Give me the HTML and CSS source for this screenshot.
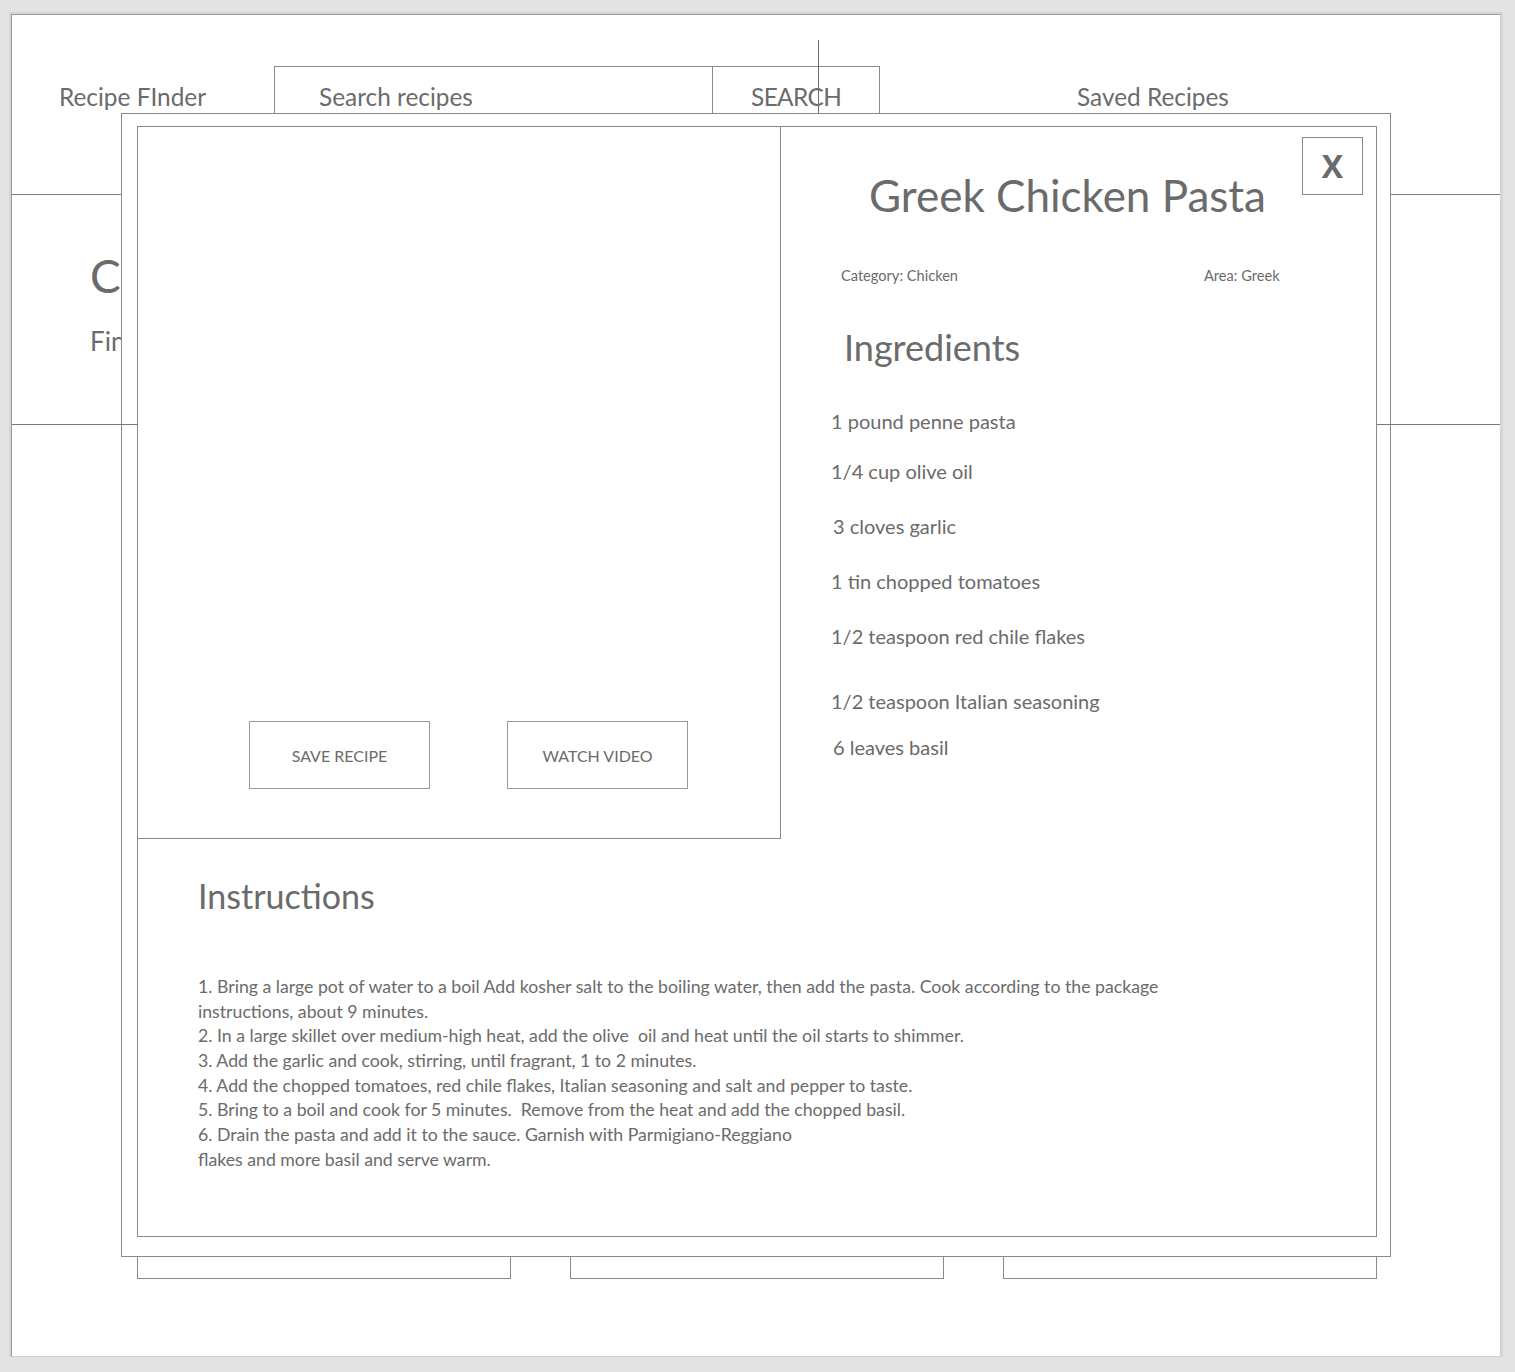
FILE: index.html
```html
<!DOCTYPE html>
<html lang="en">
<head>
    <meta charset="UTF-8">
    <meta name="viewport" content="width=device-width, initial-scale=1.0">
    <title>Recipe Finder</title>
    <link rel="stylesheet" href="styles.css">
</head>
<body>
    <div class="canvas">
        <!-- Шапка -->
        <header class="header">
            <div class="logo">Recipe FInder</div>
            <form class="search">
                <div class="search-input">Search recipes</div>
                <div class="search-btn">SEARCH</div>
            </form>
            <a href="#" class="saved-link">Saved Recipes</a>
        </header>

        <!-- Приветствие -->
        <section class="hero">
            <h1 class="hero-title">Cook Something New</h1>
            <p class="hero-text">Find recipes by name or ingredient</p>
        </section>
        <div class="divider"></div>

        <!-- Карточки рецептов -->
        <div class="cards">
            <div class="card"></div>
            <div class="card"></div>
            <div class="card"></div>
        </div>

        <!-- Окно рецепта -->
        <div class="modal">
            <div class="modal-inner">
                <div class="modal-top">
                    <div class="modal-image">
                        <button class="btn">SAVE RECIPE</button>
                        <button class="btn">WATCH VIDEO</button>
                    </div>
                    <div class="modal-details">
                        <button class="close-btn">X</button>
                        <h2 class="recipe-title">Greek Chicken Pasta</h2>
                        <div class="recipe-meta">
                            <span class="meta-category">Category: Chicken</span>
                            <span>Area: Greek</span>
                        </div>
                        <h3 class="section-title ingredients-title">Ingredients</h3>
                        <ul class="ingredients">
                            <li>1 pound penne pasta</li>
                            <li>1/4 cup olive oil</li>
                            <li class="shifted">3 cloves garlic</li>
                            <li>1 tin chopped tomatoes</li>
                            <li>1/2 teaspoon red chile flakes</li>
                            <li>1/2 teaspoon Italian seasoning</li>
                            <li class="shifted">6 leaves basil</li>
                        </ul>
                    </div>
                </div>
                <div class="instructions">
                    <h3 class="section-title instructions-title">Instructions</h3>
                    <div class="steps">
                        <p>1. Bring a large pot of water to a boil Add kosher salt to the boiling water, then add the pasta. Cook according to the package<br>instructions, about 9 minutes.</p>
                        <p>2. In a large skillet over medium-high heat, add the olive&nbsp; oil and heat until the oil starts to shimmer.</p>
                        <p>3. Add the garlic and cook, stirring, until fragrant, 1 to 2 minutes.</p>
                        <p>4. Add the chopped tomatoes, red chile flakes, Italian seasoning and salt and pepper to taste.</p>
                        <p>5. Bring to a boil and cook for 5 minutes.&nbsp; Remove from the heat and add the chopped basil.</p>
                        <p>6. Drain the pasta and add it to the sauce. Garnish with Parmigiano-Reggiano<br>flakes and more basil and serve warm.</p>
                    </div>
                </div>
            </div>
        </div>
    </div>
</body>
</html>
```

FILE: styles.css
```css
/* Общие стили */
* {
    box-sizing: border-box;
}

body {
    font-family: 'Lato', 'Open Sans', sans-serif;
    margin: 0;
    padding: 14px 0 0 11px;
    background-color: #E3E3E3;
    color: #6B6B6B;
}

.canvas {
    position: relative;
    width: 1490px;
    height: 1343px;
    background-color: #FFFFFF;
    border-top: 1px solid #9A9A9A;
    border-left: 1px solid #9A9A9A;
    border-right: 1px solid #D2D2D2;
    border-bottom: 1px solid #D2D2D2;
    box-shadow: 0 0 0 2px #D6D6D6;
}

/* Шапка */
.header {
    position: relative;
    height: 180px;
    display: flex;
    align-items: flex-start;
    padding-top: 51px;
    border-bottom: 1px solid #808080;
    font-size: 24.4px;
}

.header::after {
    content: "";
    position: absolute;
    left: 806px;
    top: 25px;
    width: 1px;
    height: 90px;
    background-color: #6B6B6B;
}

.logo {
    width: 262px;
    padding-left: 47px;
    height: 62px;
    line-height: 61px;
}

.search {
    display: flex;
    margin: 0;
}

.search-input {
    width: 439px;
    height: 62px;
    line-height: 59px;
    padding-left: 44px;
    border: 1px solid #8A8A8A;
}

.search-btn {
    width: 167px;
    height: 62px;
    line-height: 59px;
    padding-left: 38px;
    letter-spacing: -0.6px;
    border: 1px solid #8A8A8A;
    border-left: none;
}

.saved-link {
    margin-left: 197px;
    height: 62px;
    line-height: 61px;
    color: #6B6B6B;
    text-decoration: none;
}

/* Приветствие */
.hero {
    height: 229px;
    padding: 53px 0 0 78px;
}

.hero-title {
    margin: 0;
    font-size: 46px;
    font-weight: 400;
    line-height: 1.2;
}

.hero-text {
    margin: 23px 0 0;
    font-size: 26px;
    line-height: 1.2;
}

.divider {
    position: relative;
    z-index: 1;
    height: 1px;
    background-color: #7A7A7A;
}

/* Карточки */
.cards {
    display: grid;
    grid-template-columns: repeat(3, 374px);
    gap: 59px;
    padding-left: 125px;
    margin-top: 55px;
}

.card {
    height: 799px;
    border: 1px solid #8A8A8A;
}

/* Окно рецепта */
.modal {
    position: absolute;
    left: 109px;
    top: 98px;
    width: 1270px;
    height: 1144px;
    background-color: #FFFFFF;
    border: 1px solid #888;
    padding: 12px 13px 19px 15px;
}

.modal-inner {
    position: relative;
    z-index: 2;
    height: 1111px;
    background-color: #FFFFFF;
    border: 1px solid #888;
}

.modal-top {
    display: flex;
    align-items: flex-start;
}

.modal-image {
    width: 643px;
    height: 712px;
    flex-shrink: 0;
    border-right: 1px solid #888;
    border-bottom: 1px solid #888;
    display: flex;
    align-items: flex-end;
    gap: 77px;
    padding: 0 0 49px 111px;
}

.btn {
    width: 181px;
    height: 68px;
    background: #FFFFFF;
    border: 1px solid #999;
    font-family: inherit;
    font-size: 16px;
    color: #6B6B6B;
    padding: 0;
}

.modal-details {
    position: relative;
    flex: 1;
    padding-top: 42px;
}

.close-btn {
    position: absolute;
    top: 10px;
    right: 13px;
    width: 61px;
    height: 58px;
    background: #FFFFFF;
    border: 1px solid #888;
    font-family: 'Open Sans', sans-serif;
    font-size: 32px;
    font-weight: 700;
    line-height: 1;
    color: #6B6B6B;
    padding: 0;
}

.recipe-title {
    margin: 0;
    padding-right: 22px;
    text-align: center;
    font-size: 44px;
    font-weight: 400;
    line-height: 1.2;
}

.recipe-meta {
    display: flex;
    margin-top: 45px;
    padding-left: 60px;
    font-size: 14.6px;
    line-height: 1.2;
}

.meta-category {
    width: 363px;
}

.section-title {
    margin: 0;
    font-size: 36px;
    font-weight: 400;
    line-height: 1.2;
}

.ingredients-title {
    margin-top: 42px;
    padding-left: 63px;
}

/* Ингредиенты */
.ingredients {
    list-style: none;
    margin: 40px 0 0;
    padding-left: 50px;
    font-size: 20px;
    line-height: 24px;
}

.ingredients li {
    margin-top: 31px;
}

.ingredients li:first-child {
    margin-top: 0;
}

.ingredients li:nth-child(2) {
    margin-top: 26px;
}

.ingredients li:nth-child(6) {
    margin-top: 41px;
}

.ingredients li:nth-child(7) {
    margin-top: 22px;
}

.ingredients .shifted {
    padding-left: 2px;
}

/* Инструкции */
.instructions {
    padding: 37px 0 0 60px;
}

.instructions-title {
    font-size: 34px;
}

.steps {
    margin-top: 58px;
    font-size: 17.7px;
    line-height: 24.7px;
}

.steps p {
    margin: 0;
    white-space: nowrap;
}
```
